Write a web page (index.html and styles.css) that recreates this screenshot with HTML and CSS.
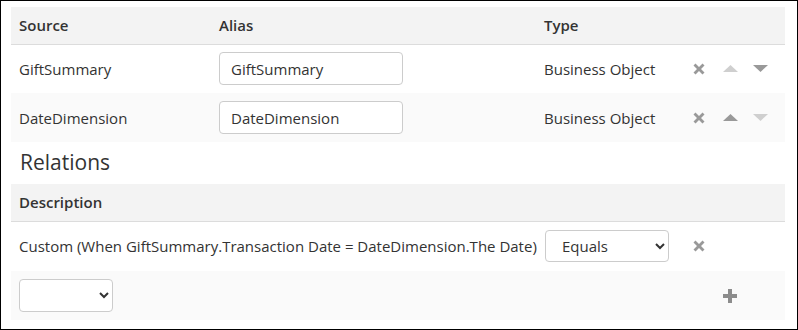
FILE: index.html
```html
<!DOCTYPE html>
<html lang="en">
<head>
  <meta charset="UTF-8">
  <meta name="viewport" content="width=device-width, initial-scale=1.0">
  <title>Query Sources</title>
  <link rel="stylesheet" href="styles.css">
</head>
<body>
  <div class="frame">
    <table class="grid sources">
      <thead>
        <tr>
          <th class="col-source">Source</th>
          <th class="col-alias">Alias</th>
          <th class="col-type">Type</th>
          <th class="col-icon"></th>
          <th class="col-icon"></th>
          <th class="col-icon"></th>
          <th></th>
        </tr>
      </thead>
      <tbody>
        <tr>
          <td>GiftSummary</td>
          <td><input type="text" class="field alias-input" value="GiftSummary"></td>
          <td>Business Object</td>
          <td class="icon-cell"><svg class="icon icon-remove" viewBox="0 0 12 12"><path d="M0.5 2.5L2.5 0.5L6 4L9.5 0.5L11.5 2.5L8 6L11.5 9.5L9.5 11.5L6 8L2.5 11.5L0.5 9.5L4 6Z"/></svg></td>
          <td class="icon-cell"><svg class="icon icon-arrow disabled" viewBox="0 0 15 7"><path d="M0 7L7.5 0L15 7Z"/></svg></td>
          <td class="icon-cell"><svg class="icon icon-arrow" viewBox="0 0 15 7"><path d="M0 0L15 0L7.5 7Z"/></svg></td>
          <td></td>
        </tr>
        <tr>
          <td>DateDimension</td>
          <td><input type="text" class="field alias-input" value="DateDimension"></td>
          <td>Business Object</td>
          <td class="icon-cell"><svg class="icon icon-remove" viewBox="0 0 12 12"><path d="M0.5 2.5L2.5 0.5L6 4L9.5 0.5L11.5 2.5L8 6L11.5 9.5L9.5 11.5L6 8L2.5 11.5L0.5 9.5L4 6Z"/></svg></td>
          <td class="icon-cell"><svg class="icon icon-arrow" viewBox="0 0 15 7"><path d="M0 7L7.5 0L15 7Z"/></svg></td>
          <td class="icon-cell"><svg class="icon icon-arrow disabled" viewBox="0 0 15 7"><path d="M0 0L15 0L7.5 7Z"/></svg></td>
          <td></td>
        </tr>
      </tbody>
    </table>

    <h3 class="section-title">Relations</h3>

    <table class="grid relations">
      <thead>
        <tr>
          <th class="col-desc">Description</th>
          <th class="col-op"></th>
          <th class="col-icon"></th>
          <th class="col-icon"></th>
          <th></th>
        </tr>
      </thead>
      <tbody>
        <tr>
          <td>Custom (When GiftSummary.Transaction Date = DateDimension.The Date)</td>
          <td>
            <select class="field op-select">
              <option selected>Equals</option>
              <option>Not equals</option>
            </select>
          </td>
          <td class="icon-cell"><svg class="icon icon-remove" viewBox="0 0 12 12"><path d="M0.5 2.5L2.5 0.5L6 4L9.5 0.5L11.5 2.5L8 6L11.5 9.5L9.5 11.5L6 8L2.5 11.5L0.5 9.5L4 6Z"/></svg></td>
          <td></td>
          <td></td>
        </tr>
        <tr>
          <td>
            <select class="field new-select">
              <option></option>
              <option>GiftSummary</option>
              <option>DateDimension</option>
            </select>
          </td>
          <td></td>
          <td></td>
          <td class="icon-cell"><svg class="icon icon-add" viewBox="0 0 14 14"><path d="M5 0H9V5H14V9H9V14H5V9H0V5H5Z"/></svg></td>
          <td></td>
        </tr>
      </tbody>
    </table>
  </div>
</body>
</html>
```

FILE: styles.css
```css
* {
  box-sizing: border-box;
}

body {
  margin: 0;
  font-family: "Open Sans", Arial, sans-serif;
  font-size: 15px;
  color: #333;
  background-color: #fff;
}

.frame {
  height: 330px;
  border: 1px solid #000;
  padding: 6px 12px 0 10px;
}

.grid {
  width: 100%;
  border-collapse: collapse;
  table-layout: fixed;
}

.grid th {
  height: 37px;
  padding: 0 8px;
  text-align: left;
  font-weight: 600;
  background-color: #f3f3f3;
  border-bottom: 1px solid #dcdcdc;
}

.grid td {
  height: 49px;
  padding: 0 8px;
  vertical-align: middle;
  white-space: nowrap;
}

.relations tbody tr:first-child td {
  height: 50px;
}

.grid tbody tr:nth-child(even) td {
  background-color: #fafafa;
}

.col-source { width: 200px; }
.col-alias { width: 325px; }
.col-type { width: 149px; }
.col-desc { width: 526px; }
.col-op { width: 148px; }
.col-icon { width: 30px; }

.icon-cell {
  line-height: 0;
}

.icon {
  display: inline-block;
  fill: #999;
}

.icon-remove {
  width: 12px;
  height: 12px;
}

.icon-arrow {
  width: 15px;
  height: 7px;
}

.icon-arrow.disabled {
  fill: #cfcfcf;
}

.icon-add {
  width: 14px;
  height: 14px;
  fill: #8c8c8c;
}

.field {
  font-family: "Open Sans", Arial, sans-serif;
  font-size: 15px;
  color: #333;
  background-color: #fff;
  border: 1px solid #ccc;
  border-radius: 4px;
}

.alias-input {
  width: 184px;
  height: 33px;
  padding: 0 11px;
}

.op-select {
  width: 124px;
  height: 32px;
  padding: 0 8px 0 12px;
}

.new-select {
  width: 94px;
  height: 33px;
}

.section-title {
  margin: 0;
  padding: 2px 0 4px 9px;
  font-size: 21px;
  font-weight: 400;
  line-height: 36px;
}
```
